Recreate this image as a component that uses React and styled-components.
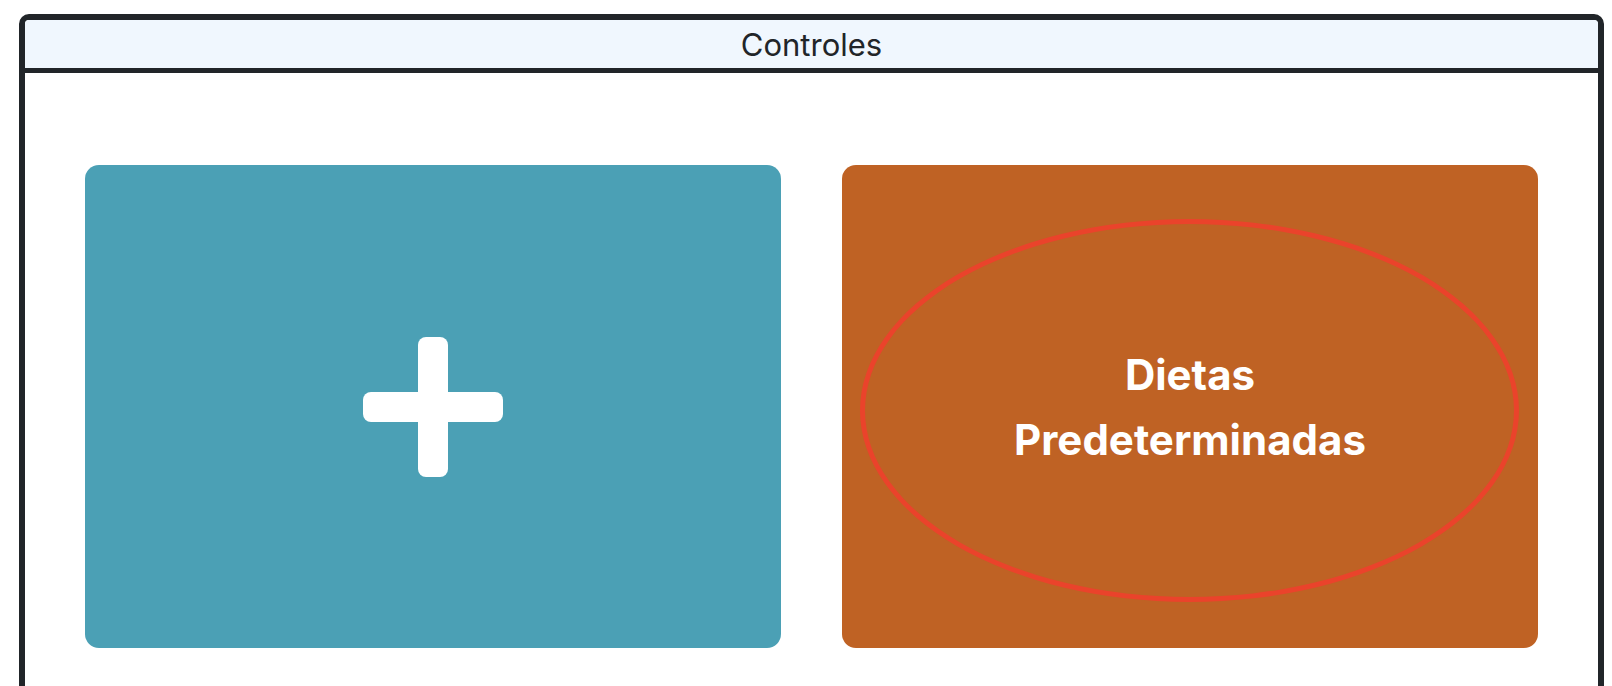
import React from 'react';
import styled, {createGlobalStyle} from 'styled-components';

const GlobalStyle = createGlobalStyle`
  html, body {
    margin: 0;
    padding: 0;
    background: #ffffff;
    font-family: Inter, "Noto Sans", "Liberation Sans", sans-serif;
    overflow: hidden;
  }
`;

const Page = styled.div`
  padding: 14px 8px 0 19px;
`;

const Panel = styled.section`
  border: 6px solid #212529;
  border-radius: 10px;
  background: #ffffff;
  overflow: hidden;
`;

const PanelHeader = styled.header`
  height: 48px;
  background: #f0f7fe;
  border-bottom: 5px solid #212529;
  display: flex;
  align-items: center;
  justify-content: center;
  font-size: 31px;
  color: #212529;
`;

const PanelBody = styled.div`
  padding: 92px 60px 60px;
  display: grid;
  grid-template-columns: 1fr 1fr;
  gap: 61px;
`;

const Tile = styled.button`
  position: relative;
  height: 483px;
  border: none;
  border-radius: 14px;
  background: ${p => p.$color};
  display: flex;
  align-items: center;
  justify-content: center;
  padding: 0;
  cursor: pointer;
  font-family: inherit;
`;

const TileLabel = styled.span`
  color: #ffffff;
  font-size: 42px;
  font-weight: 700;
  line-height: 65px;
  text-align: center;
`;

const Highlight = styled.span`
  position: absolute;
  left: 18px;
  top: 54px;
  width: 659px;
  height: 383px;
  box-sizing: border-box;
  border: 5px solid #ea432b;
  border-radius: 50%;
  pointer-events: none;
`;

const PlusIcon = () => (
    <svg width="140" height="140" viewBox="0 0 140 140">
        <rect x="55" y="0" width="30" height="140" rx="8" fill="#ffffff"/>
        <rect x="0" y="55" width="140" height="30" rx="8" fill="#ffffff"/>
    </svg>
);

export default function App() {
    return (
        <Page>
            <GlobalStyle/>
            <Panel>
                <PanelHeader>Controles</PanelHeader>
                <PanelBody>
                    <Tile $color="#4ba0b5" aria-label="Agregar">
                        <PlusIcon/>
                    </Tile>
                    <Tile $color="#bf6224">
                        <TileLabel>Dietas<br/>Predeterminadas</TileLabel>
                        <Highlight/>
                    </Tile>
                </PanelBody>
            </Panel>
        </Page>
    );
}
